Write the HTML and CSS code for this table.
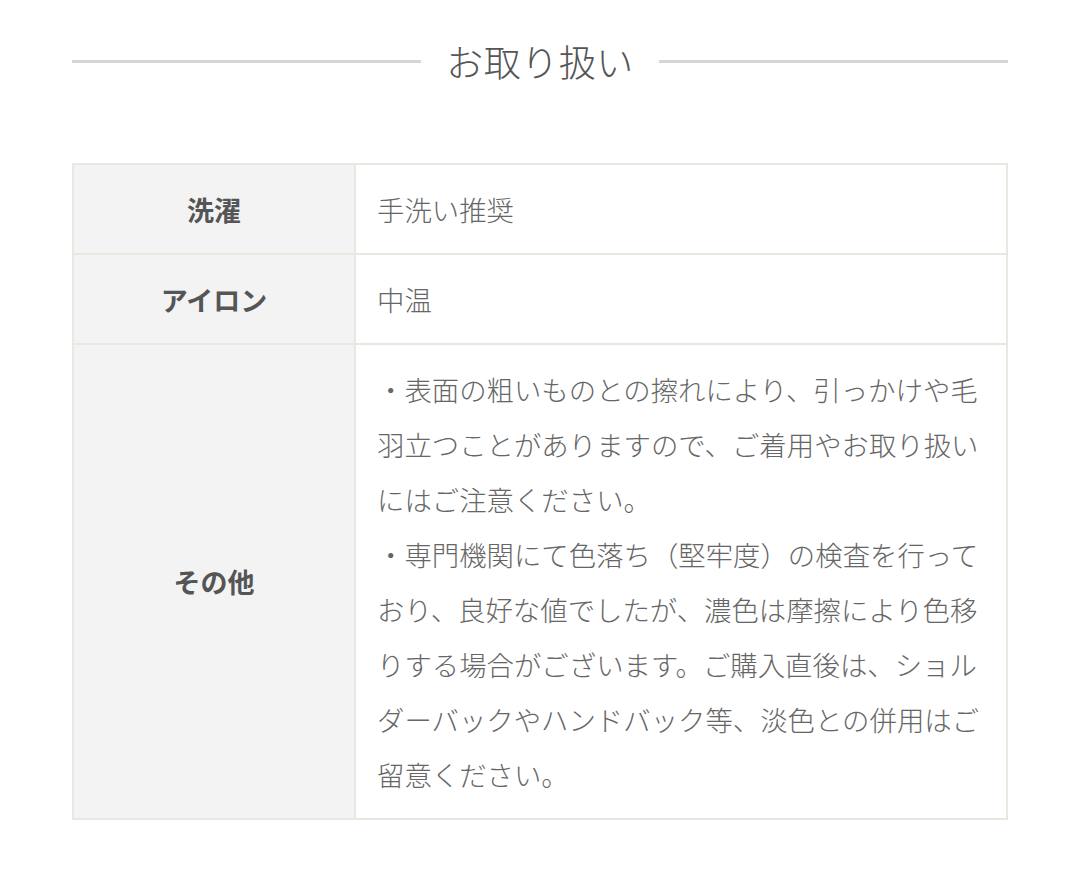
FILE: index.html
```html
<!DOCTYPE html>
<html lang="ja">
<head>
    <meta charset="UTF-8">
    <meta name="viewport" content="width=device-width, initial-scale=1.0">
    <title>お取り扱い</title>
    <link rel="stylesheet" href="styles.css">
</head>
<body>
    <div class="section">
        <h2 class="section-title"><span>お取り扱い</span></h2>

        <table class="care-table">
            <tr>
                <th>洗濯</th>
                <td>手洗い推奨</td>
            </tr>
            <tr>
                <th>アイロン</th>
                <td>中温</td>
            </tr>
            <tr>
                <th>その他</th>
                <td>・表面の粗いものとの擦れにより、引っかけや毛羽立つことがありますので、ご着用やお取り扱いにはご注意ください。<br>・専門機関にて色落ち（堅牢度）の検査を行っており、良好な値でしたが、濃色は摩擦により色移りする場合がございます。ご購入直後は、ショルダーバックやハンドバック等、淡色との併用はご留意ください。</td>
            </tr>
        </table>
    </div>
</body>
</html>
```

FILE: styles.css
```css
* {
    margin: 0;
    padding: 0;
    box-sizing: border-box;
}

body {
    font-family: "Noto Sans CJK JP", "Noto Sans", sans-serif;
    background: #ffffff;
    color: #555;
}

.section {
    padding: 34px 71px 40px 72px;
}

.section-title {
    display: flex;
    align-items: center;
    gap: 25px;
    font-size: 37px;
    font-weight: 300;
    line-height: 54px;
    color: #555;
    letter-spacing: 0.5px;
}

.section-title::before,
.section-title::after {
    content: "";
    flex: 1;
    height: 3px;
    background: #d6d6d6;
}

.care-table {
    width: 100%;
    margin-top: 75px;
    border-collapse: collapse;
    border: 2px solid #e9e7e0;
}

.care-table th,
.care-table td {
    border: 2px solid #e9e7e0;
    padding: 16.5px 22px 16.5px 21px;
    font-size: 27.4px;
    line-height: 55px;
    vertical-align: middle;
}

.care-table th {
    width: 282px;
    background: #f3f3f3;
    font-size: 27px;
    font-weight: bold;
    color: #555;
    text-align: center;
    padding: 16.5px 10px;
}

.care-table td {
    font-weight: 300;
    color: #666;
    text-align: left;
    line-break: strict;
}
```
